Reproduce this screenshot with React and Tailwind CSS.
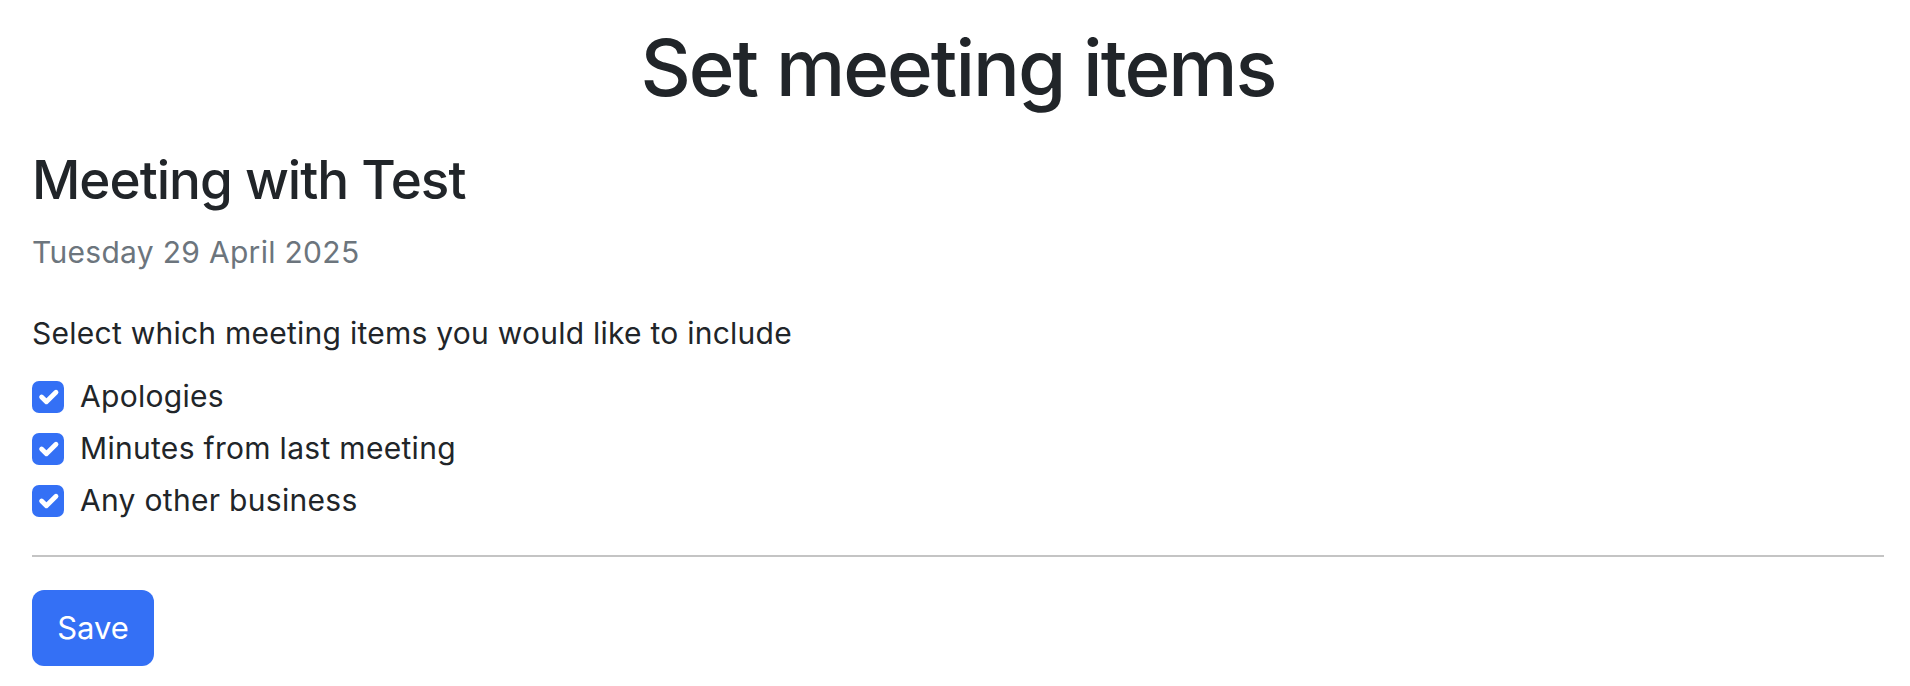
import React from "react";

function Check() {
  return (
    <span className="flex h-[32px] w-[32px] shrink-0 items-center justify-center rounded-[7px] bg-[#3470f5]">
      <svg viewBox="0 0 20 20" className="h-[32px] w-[32px]" fill="none">
        <path d="M6 10l3 3l6-6" stroke="#fff" strokeWidth="3" strokeLinecap="round" strokeLinejoin="round" />
      </svg>
    </span>
  );
}

export default function App() {
  const items = ["Apologies", "Minutes from last meeting", "Any other business"];
  return (
    <div className="min-h-[686px] bg-white pl-[32px] pr-[26px] text-[#212529]" style={{ fontFamily: "Inter, 'Noto Sans', sans-serif" }}>
      <h1 className="pt-[20px] text-center text-[78px] font-medium leading-[96px] tracking-[-2px]">Set meeting items</h1>
      <h2 className="mt-[32px] text-[53px] font-medium leading-[65px] tracking-[-1px]">Meeting with Test</h2>
      <p className="mt-[17px] text-[30px] leading-[45px] tracking-[0.3px] text-[#6c757d]">Tuesday 29 April 2025</p>
      <p className="mt-[36px] text-[30px] leading-[45px] tracking-[0.25px]">Select which meeting items you would like to include</p>
      <div className="mt-[18px] flex flex-col gap-[7px]">
        {items.map((t) => (
          <label key={t} className="flex items-center gap-[16px] text-[30px] leading-[45px] tracking-[0.3px]">
            <Check />
            <span>{t}</span>
          </label>
        ))}
      </div>
      <hr className="mt-[32px] h-[2px] border-0 bg-[#c4c4c4]" />
      <button className="mt-[33px] h-[76px] w-[122px] rounded-[12px] bg-[#3470f5] text-[31px] text-white">Save</button>
    </div>
  );
}
